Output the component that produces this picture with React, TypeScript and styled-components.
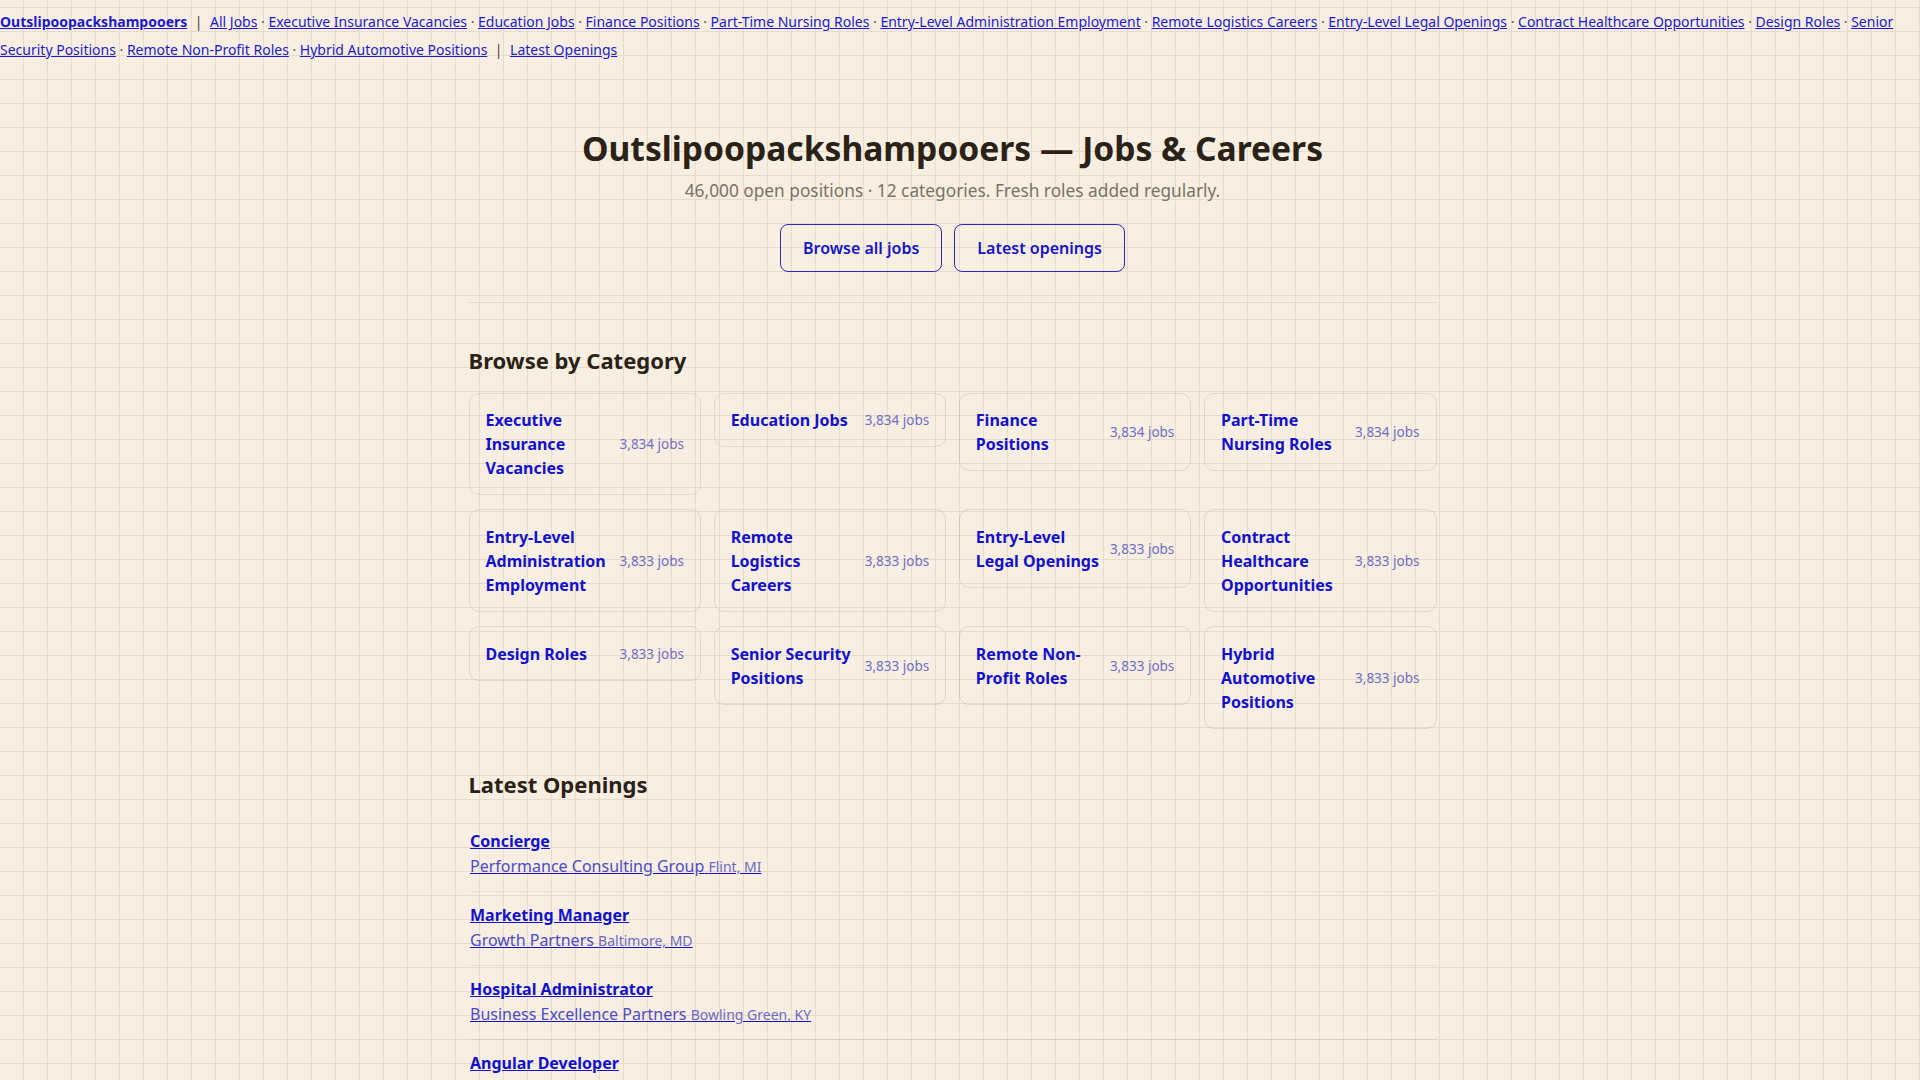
import styled, { createGlobalStyle } from 'styled-components';

const categories: { name: string; count: string }[] = [
	{ name: 'Executive Insurance Vacancies', count: '3,834 jobs' },
	{ name: 'Education Jobs', count: '3,834 jobs' },
	{ name: 'Finance Positions', count: '3,834 jobs' },
	{ name: 'Part-Time Nursing Roles', count: '3,834 jobs' },
	{ name: 'Entry-Level Administration Employment', count: '3,833 jobs' },
	{ name: 'Remote Logistics Careers', count: '3,833 jobs' },
	{ name: 'Entry-Level Legal Openings', count: '3,833 jobs' },
	{ name: 'Contract Healthcare Opportunities', count: '3,833 jobs' },
	{ name: 'Design Roles', count: '3,833 jobs' },
	{ name: 'Senior Security Positions', count: '3,833 jobs' },
	{ name: 'Remote Non-Profit Roles', count: '3,833 jobs' },
	{ name: 'Hybrid Automotive Positions', count: '3,833 jobs' },
];

const jobs: { title: string; company: string; location: string }[] = [
	{ title: 'Concierge', company: 'Performance Consulting Group', location: 'Flint, MI' },
	{ title: 'Marketing Manager', company: 'Growth Partners', location: 'Baltimore, MD' },
	{ title: 'Hospital Administrator', company: 'Business Excellence Partners', location: 'Bowling Green, KY' },
	{ title: 'Angular Developer', company: 'Brightline Technologies', location: 'Austin, TX' },
	{ title: 'Registered Nurse', company: 'Summit Health Group', location: 'Tucson, AZ' },
	{ title: 'Financial Analyst', company: 'Capital Ridge Advisors', location: 'Columbus, OH' },
	{ title: 'Legal Assistant', company: 'Harbor Point Legal', location: 'Providence, RI' },
	{ title: 'Logistics Coordinator', company: 'Northstar Freight', location: 'Memphis, TN' },
	{ title: 'Graphic Designer', company: 'Blue Fern Studio', location: 'Portland, OR' },
	{ title: 'Security Officer', company: 'Guardian Services', location: 'Reno, NV' },
	{ title: 'Program Coordinator', company: 'Community Bridges', location: 'Albany, NY' },
];

export default function App() {
	return (
		<>
			<GlobalStyle />
			<TopNav>
				<NavLink href="#" $brand>
					Outslipoopackshampooers
				</NavLink>
				<Pipe>|</Pipe>
				<NavLink href="#">All Jobs</NavLink>
				{categories.map(({ name }) => (
					<span key={name}>
						<Dot>·</Dot>
						<NavLink href="#">{name}</NavLink>
					</span>
				))}
				<Pipe>|</Pipe>
				<NavLink href="#">Latest Openings</NavLink>
			</TopNav>
			<Main>
				<Hero>
					<Title>Outslipoopackshampooers — Jobs &amp; Careers</Title>
					<Lead>46,000 open positions · 12 categories. Fresh roles added regularly.</Lead>
					<HeroActions>
						<OutlineButton href="#">Browse all jobs</OutlineButton>
						<OutlineButton href="#">Latest openings</OutlineButton>
					</HeroActions>
				</Hero>
				<Divider />
				<Section>
					<SectionTitle>Browse by Category</SectionTitle>
					<CategoryGrid>
						{categories.map(({ name, count }) => (
							<CategoryCard href="#" key={name}>
								<CategoryName>{name}</CategoryName>
								<CategoryCount>{count}</CategoryCount>
							</CategoryCard>
						))}
					</CategoryGrid>
				</Section>
				<Section $top="41px">
					<SectionTitle $gap="19px">Latest Openings</SectionTitle>
					<JobList>
						{jobs.map((job) => (
							<JobItem key={job.title}>
								<JobLink href="#">
									<JobTitle>{job.title}</JobTitle>
									<JobMeta>
										{job.company} <JobLocation>{job.location}</JobLocation>
									</JobMeta>
								</JobLink>
							</JobItem>
						))}
					</JobList>
				</Section>
			</Main>
		</>
	);
}

const GlobalStyle = createGlobalStyle`
	html, body {
		margin: 0;
		padding: 0;
	}
	body {
		/* the reference keeps a 15px scrollbar gutter on the right */
		padding-right: 15px;
		font-family: "Noto Sans", "DejaVu Sans", sans-serif;
		color: #2b2219;
		background-color: #f8efe2;
		background-image:
			linear-gradient(to right, #e8dcc9 1px, transparent 1px),
			linear-gradient(to bottom, #e8dcc9 1px, transparent 1px);
		background-size: 24px 24px;
		background-position: 23px 7px;
	}
`;

const TopNav = styled.nav`
	padding: 8px 0 6px;
	font-size: 14px;
	line-height: 28px;
`;

const NavLink = styled.a<{ $brand?: boolean }>`
	color: #1a1acc;
	text-decoration: underline;
	font-weight: ${({ $brand }) => ($brand ? 700 : 400)};
`;

const Pipe = styled.span`
	margin: 0 7.5px;
	color: #4a4038;
`;

const Dot = styled.span`
	margin: 0 3.6px;
	color: #5a5048;
`;

const Main = styled.main`
	max-width: 968px;
	margin: 0 auto;
	padding-bottom: 48px;
`;

const Hero = styled.header`
	padding: 57px 0 30px;
	text-align: center;
`;

const Title = styled.h1`
	margin: 0;
	font-size: 33.6px;
	line-height: 1.25;
	font-weight: 700;
	color: #2a2117;
`;

const Lead = styled.p`
	margin: 8px 0 0;
	font-size: 17.3px;
	line-height: 27px;
	color: #7b7166;
`;

const HeroActions = styled.div`
	display: flex;
	justify-content: center;
	gap: 12px;
	margin-top: 20px;
`;

const OutlineButton = styled.a`
	display: inline-block;
	padding: 11px 22px;
	border: 1px solid #2a2ac2;
	border-radius: 8px;
	font-size: 16px;
	line-height: 24px;
	font-weight: 600;
	color: #1414c8;
	text-decoration: none;
`;

const Divider = styled.hr`
	margin: 0;
	border: 0;
	height: 1px;
	background: #e4d9c8;
`;

const Section = styled.section<{ $top?: string }>`
	padding-top: ${({ $top }) => $top ?? '43px'};
`;

const SectionTitle = styled.h2<{ $gap?: string }>`
	margin: 0 0 ${({ $gap }) => $gap ?? '18px'};
	font-size: 22px;
	line-height: 1.3;
	font-weight: 700;
	color: #2a2117;
`;

const CategoryGrid = styled.div`
	display: grid;
	grid-template-columns: repeat(4, 1fr);
	column-gap: 12.67px;
	row-gap: 14px;
	align-items: start;
`;

const CategoryCard = styled.a`
	display: flex;
	align-items: center;
	justify-content: space-between;
	gap: 10px;
	padding: 14.4px 16px;
	border: 1px solid rgba(90, 70, 40, 0.14);
	border-radius: 10px;
	text-decoration: none;
`;

const CategoryName = styled.span`
	font-size: 16px;
	line-height: 24px;
	font-weight: 700;
	color: #1111cc;
`;

const CategoryCount = styled.span`
	flex-shrink: 0;
	font-size: 13.5px;
	line-height: 20px;
	color: #6e6ec6;
`;

const JobList = styled.ul`
	margin: 0;
	padding: 0 0 0 1.5px;
	list-style: none;
`;

const JobItem = styled.li`
	padding: 11px 0;
	border-bottom: 1px solid rgba(90, 70, 40, 0.08);
`;

const JobLink = styled.a`
	display: block;
	color: #1111cc;
	text-decoration: underline;
`;

const JobTitle = styled.div`
	font-size: 16px;
	line-height: 25.6px;
	font-weight: 700;
	color: #1111cc;
`;

const JobMeta = styled.div`
	font-size: 16px;
	line-height: 25.6px;
	color: #4b4bc6;
`;

const JobLocation = styled.span`
	font-size: 14px;
	color: #6a6ac4;
`;
